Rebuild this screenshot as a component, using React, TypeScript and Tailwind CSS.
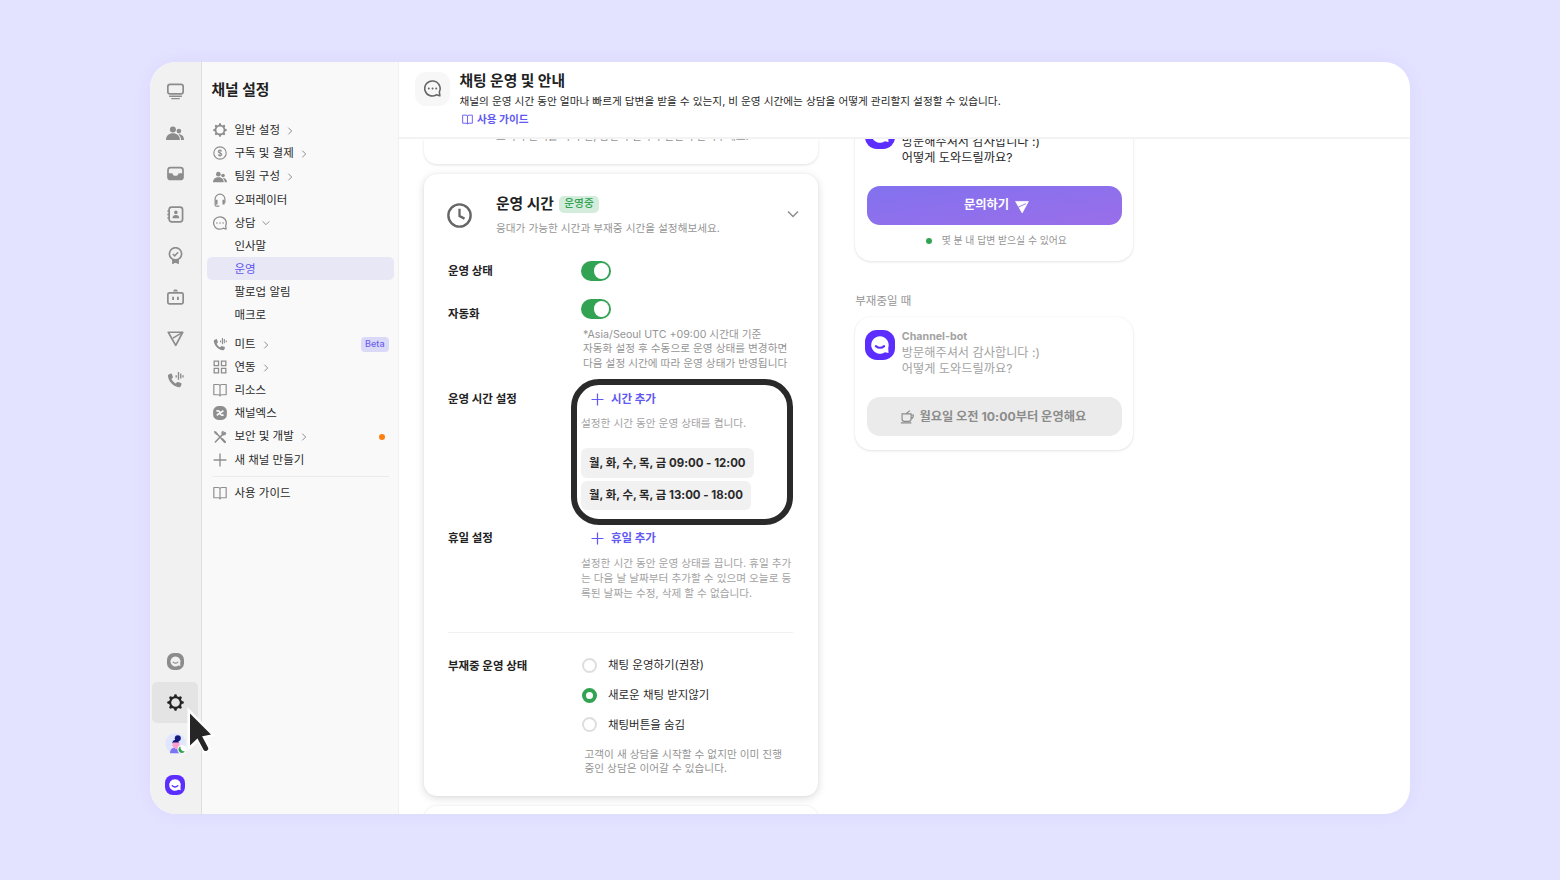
import type { ReactNode } from "react";
import clsx from "clsx";

interface IconProps {
  size?: number;
  className?: string;
}

function Svg({ size = 17, className, children }: IconProps & { children: ReactNode }) {
  return (
    <svg
      width={size}
      height={size}
      viewBox="0 0 24 24"
      fill="none"
      stroke="currentColor"
      strokeWidth={2}
      className={clsx("shrink-0", className)}
    >
      {children}
    </svg>
  );
}

const teeth = [0, 45, 90, 135, 180, 225, 270, 315];

function CogIcon(props: IconProps) {
  return (
    <Svg {...props}>
      <circle cx="12" cy="12" r="7.6" strokeWidth={3} />
      {teeth.map((deg) => (
        <path
          key={deg}
          d="M9.6 4 L10.5 0.8 Q12 -0.4 13.5 0.8 L14.4 4 Z"
          transform={`rotate(${deg} 12 12)`}
          fill="currentColor"
          stroke="none"
        />
      ))}
    </Svg>
  );
}

function MonitorIcon(props: IconProps) {
  return (
    <Svg {...props}>
      <rect x="1.2" y="2" width="21.6" height="13.4" rx="3" strokeWidth={2.4} />
      <path d="M3 18.6h18M6 22h12" />
    </Svg>
  );
}

function PeopleIcon(props: IconProps) {
  return (
    <Svg {...props}>
      <g fill="currentColor" stroke="none">
        <circle cx="9.2" cy="7.2" r="4" />
        <path d="M0 21.2C0 15.6 4 12.4 9.2 12.4S18.5 15.6 18.5 21.2Z" />
        <circle cx="17.2" cy="9.4" r="3.1" />
        <path d="M17.3 13.8C21.3 13.8 24 16.8 24 21.2h-3.9c0-3-1.2-5.4-3.4-7.3z" />
      </g>
    </Svg>
  );
}

function InboxIcon(props: IconProps) {
  return (
    <Svg {...props}>
      <rect x="1.4" y="3.8" width="21.2" height="16.6" rx="3.6" strokeWidth={2.4} />
      <path
        d="M1.4 11.5H7.5c.6 2.4 2.2 3.6 4.5 3.6s3.9-1.2 4.5-3.6h6.1V17a3.6 3.6 0 0 1-3.6 3.6H5A3.6 3.6 0 0 1 1.4 17Z"
        fill="currentColor"
        stroke="none"
      />
    </Svg>
  );
}

function ContactIcon(props: IconProps) {
  return (
    <Svg {...props}>
      <rect x="3" y="1.6" width="19" height="20.8" rx="3.6" strokeWidth={2.4} />
      <path d="M0.4 7.2H3M0.4 12H3M0.4 16.8H3" />
      <circle cx="12.5" cy="9" r="2.5" fill="currentColor" stroke="none" />
      <path d="M7.6 17.3c0-3 2-4.7 4.9-4.7s4.9 1.7 4.9 4.7z" fill="currentColor" stroke="none" />
    </Svg>
  );
}

function AwardIcon(props: IconProps) {
  return (
    <Svg {...props}>
      <circle cx="12" cy="9.6" r="8.6" strokeWidth={2.4} />
      <path d="M8.2 9.8l2.7 2.7 4.8-5.2" />
      <path d="M7.2 17.8V24.4l4.8-2.3 4.8 2.3v-6.6c-3 1.3-6.6 1.3-9.6 0z" fill="currentColor" stroke="none" />
    </Svg>
  );
}

function BotIcon(props: IconProps) {
  return (
    <Svg {...props}>
      <rect x="1.2" y="5.6" width="21.6" height="15.4" rx="2.2" strokeWidth={2.4} />
      <path d="M8.6 10.8v4.8M15.4 10.8v4.8" strokeWidth={2.6} />
      <path d="M8.6 3.6C8.8 1.5 10.2.6 12 .6s3.2.9 3.4 3z" fill="currentColor" stroke="none" />
    </Svg>
  );
}

function SendIcon(props: IconProps) {
  return (
    <Svg {...props}>
      <path d="M1.8 3.2H22.2L12.3 21.6Z" strokeWidth={2.4} strokeLinejoin="round" />
      <path d="M22 3.4L8.3 11.6" />
    </Svg>
  );
}

function SendFilledIcon(props: IconProps) {
  return (
    <Svg {...props}>
      <path d="M1 2.5H23L12.3 22.3Z" fill="currentColor" strokeWidth={1.2} strokeLinejoin="round" />
      <path d="M5.5 12.3L18.8 6.3" stroke="#8e70ed" strokeWidth={1.6} />
    </Svg>
  );
}

function MeetIcon(props: IconProps) {
  return (
    <Svg {...props}>
      <path
        d="M6.2 11.4c1.3 2.7 3.3 4.9 5.9 6.3l2.1-1.9c.4-.4.9-.5 1.4-.3l4.2 1.6c.6.2.9.9.7 1.5l-.9 2.6c-.4 1.2-1.5 1.8-2.7 1.7C9.2 22 2.3 15 1.4 7.3 1.2 6 1.9 4.9 3.1 4.5l2.3-.8c.7-.2 1.3.1 1.5.7l1.4 4c.2.5 0 1-.3 1.3z"
        fill="currentColor"
        stroke="none"
      />
      <path d="M13 6v3M16.2 1.5v11M19.4 3.5v7M22.6 6v3" strokeWidth={1.9} />
    </Svg>
  );
}

function DollarIcon(props: IconProps) {
  return (
    <Svg {...props}>
      <circle cx="12" cy="12" r="10.6" />
      <path
        d="M15 9.3c-.3-1.3-1.5-1.9-3-1.9-1.7 0-3 .8-3 2.2 0 3.3 6.1 1.5 6.1 4.8 0 1.4-1.4 2.2-3.1 2.2-1.7 0-2.9-.8-3.2-2.2M12 5.4v13.2"
        strokeWidth={1.8}
      />
    </Svg>
  );
}

function HeadsetIcon(props: IconProps) {
  return (
    <Svg {...props}>
      <path d="M3.6 17V10.4a8.4 8.4 0 0 1 16.8 0V17" />
      <path d="M4 11.5h3.8v8.3H4zM16.2 11.5H20v8.3h-3.8z" fill="currentColor" stroke="none" />
      <path d="M3.6 17v3.5c0 1.2.8 2 2 2H11" />
    </Svg>
  );
}

function ChatIcon(props: IconProps) {
  return (
    <Svg {...props}>
      <path
        d="M12 1.4a10.6 10.6 0 1 0 5.4 19.5l5 1.5-.7-5.8A10.6 10.6 0 0 0 12 1.4Z"
        strokeWidth={2.2}
        strokeLinejoin="round"
      />
      <path d="M6.7 12h.1M12 12h.1M17.2 12h.1" strokeWidth={2.7} strokeLinecap="round" />
    </Svg>
  );
}

function GridIcon(props: IconProps) {
  return (
    <Svg {...props}>
      <path d="M2 2h7.5v7.5H2zM14.5 2H22v7.5h-7.500zM2 14.5h7.500V22H2zM14.5 14.5H22V22h-7.500z" strokeWidth={2.2} />
    </Svg>
  );
}

function BookIcon(props: IconProps) {
  return (
    <Svg {...props}>
      <path
        d="M1.4 2.5h7.4Q12 2.5 12 5 12 2.5 15.2 2.5h7.4v17.6h-7.4Q12 20.1 12 22.3 12 20.1 8.8 20.1H1.4ZM12 4.5v16.5"
        strokeLinejoin="round"
      />
    </Svg>
  );
}

function ChannelXIcon(props: IconProps) {
  return (
    <Svg {...props}>
      <rect x="0.2" y="0.2" width="23.6" height="23.6" rx="9" fill="currentColor" stroke="none" />
      <path
        d="M5.8 8.4H9.5c2.8 0 2.2 7.2 5 7.2h3.7M17.8 8.2L6.4 15.8"
        stroke="#f9f9f9"
        strokeWidth={2.8}
      />
    </Svg>
  );
}

function ToolsIcon(props: IconProps) {
  return (
    <Svg {...props}>
      <path d="M19.5 4.5L4 20.5M7 7L20 20.5" strokeWidth={2.6} strokeLinecap="round" />
      <path d="M1.5 1.5l4 1.2 3 4-2 2-4-3z" fill="currentColor" stroke="none" />
      <path d="M21.8 3.3a4 4 0 1 1-3.4-1.9L17.5 5l1.500 1.4z" fill="currentColor" stroke="none" />
      <path d="M16 16l4.5 4.5" strokeWidth={3.8} strokeLinecap="round" />
    </Svg>
  );
}

function PlusIcon(props: IconProps) {
  return (
    <Svg {...props}>
      <path d="M12 1v22M1 12h22" strokeWidth={2.3} />
    </Svg>
  );
}

function ChevronIcon({ down, ...props }: IconProps & { down?: boolean }) {
  return (
    <Svg {...props}>
      <path d={down ? "M2 7l10 10L22 7" : "M7 2l10 10L7 22"} strokeWidth={3} />
    </Svg>
  );
}

function ClockIcon(props: IconProps) {
  return (
    <Svg {...props}>
      <circle cx="12" cy="12" r="10.7" strokeWidth={2.3} />
      <path d="M12 5.5v7l4.8 2.5" strokeWidth={2.2} />
    </Svg>
  );
}

function CupIcon(props: IconProps) {
  return (
    <Svg {...props}>
      <path d="M3.5 6.500h15.5v9a4 4 0 0 1-4 4H7.500a4 4 0 0 1-4-4zM19 8.500h4c0 4-1.200 6-4.500 7M1.500 22.200h18M11 6.500c0-2 3-2.500 6-5.500" />
    </Svg>
  );
}

function ChannelLogo({ face = "#fff", ...props }: IconProps & { face?: string }) {
  return (
    <Svg {...props}>
      <rect width="24" height="24" rx="9.5" fill="currentColor" stroke="none" />
      <path d="M12 5a7 7 0 1 0 3.9 12.8l2.9.6-.2-4.2A7 7 0 0 0 12 5Z" fill={face} stroke="none" />
      <path d="M8.7 12.9c1.9 1.7 4.7 1.7 6.6 0" strokeWidth={1.7} strokeLinecap="round" />
    </Svg>
  );
}

function Avatar() {
  return (
    <svg width="21" height="21" viewBox="0 0 21 21" className="overflow-visible">
      <circle cx="10.5" cy="10.5" r="10.2" fill="#e0e6ff" />
      <path d="M5 20.2c0-3.700 2.200-5.700 6-5.700s5 2.500 5 5.700z" fill="#7c74f2" />
      <circle cx="12.8" cy="5.2" r="3" fill="#141a7c" />
      <path d="M7.5 9.5C8 7 10 6 13.5 7.5L14 11H8z" fill="#141a7c" />
      <path d="M8 9.500h6.500v3c0 1.800-1.200 2.800-2 3.500h-2.500c0-1-.5-2-2-2.600-1.300-.6-1.200-2 0-2z" fill="#ff9fd0" />
      <circle cx="17" cy="16.6" r="4.6" fill="#fff" />
      <path d="M15.5 13.2a3.6 3.6 0 1 0 4.5 5.3A4.2 4.2 0 0 1 15.5 13.2Z" fill="#32a353" />
    </svg>
  );
}

const railTop = [MonitorIcon, PeopleIcon, InboxIcon, ContactIcon, AwardIcon, BotIcon, SendIcon, MeetIcon];

interface MenuItem {
  label: string;
  icon?: (props: IconProps) => ReactNode;
  arrow?: "right" | "down";
  active?: boolean;
  beta?: boolean;
  dot?: boolean;
}

const mainMenu: MenuItem[] = [
  { label: "일반 설정", icon: CogIcon, arrow: "right" },
  { label: "구독 및 결제", icon: DollarIcon, arrow: "right" },
  { label: "팀원 구성", icon: PeopleIcon, arrow: "right" },
  { label: "오퍼레이터", icon: HeadsetIcon },
  { label: "상담", icon: ChatIcon, arrow: "down" },
  { label: "인사말" },
  { label: "운영", active: true },
  { label: "팔로업 알림" },
  { label: "매크로" },
];

const extraMenu: MenuItem[] = [
  { label: "미트", icon: MeetIcon, arrow: "right", beta: true },
  { label: "연동", icon: GridIcon, arrow: "right" },
  { label: "리소스", icon: BookIcon },
  { label: "채널엑스", icon: ChannelXIcon },
  { label: "보안 및 개발", icon: ToolsIcon, arrow: "right", dot: true },
  { label: "새 채널 만들기", icon: PlusIcon },
];

function MenuRow({ label, icon: Icon, arrow, active, beta, dot }: MenuItem) {
  return (
    <div
      className={clsx(
        "flex h-[23.1px] items-center rounded-[5px] pr-[5px] pl-[5.5px] text-[11.48px]",
        active ? "bg-[#e8e7f6] text-[#5e56f0]" : "text-[#2a2a2a]"
      )}
    >
      <span className="mr-[7.5px] flex w-[15px] justify-center text-[#8e8e8e]">{Icon && <Icon size={14} />}</span>
      <span className="pt-px">{label}</span>
      {arrow && <ChevronIcon size={8} down={arrow === "down"} className="mt-px ml-[6.5px] text-[#8e8e8e]" />}
      {beta && (
        <span className="ml-auto flex h-[15px] items-center rounded-[4px] bg-[#dbd9f8] px-1 text-[9px] font-medium text-[#6a62ee]">
          Beta
        </span>
      )}
      {dot && <span className="mr-[3.5px] ml-auto size-[6px] rounded-full bg-[#ff7f0e]" />}
    </div>
  );
}

function Rail() {
  return (
    <nav className="flex w-[52px] flex-col justify-between border-r border-[#dedede] bg-[#f1f1f1] pt-[9px] pb-[9px] text-[#8c8c8c]">
      <div className="pr-px">
        {railTop.map((Icon, index) => (
          <div key={index} className="flex h-[41.1px] items-center justify-center">
            <Icon size={index === 1 ? 18 : 17} />
          </div>
        ))}
      </div>
      <div className="pr-px">
        <div className="flex h-[41px] items-center justify-center">
          <ChannelLogo size={17} face="#f1f1f1" />
        </div>
        <div className="mx-[2px] flex h-[41px] items-center justify-center rounded-[5px] bg-[#e4e4e4] text-[#222]">
          <CogIcon size={17} />
        </div>
        <div className="flex h-[41px] items-center justify-center">
          <Avatar />
        </div>
        <div className="flex h-[41px] items-center justify-center text-[#5b2eff]">
          <ChannelLogo size={20} />
        </div>
      </div>
    </nav>
  );
}

function Sidebar() {
  return (
    <aside className="w-[197px] border-r border-[#f0f0f0] bg-[#f9f9f9] px-[4.5px] pt-[18px]">
      <h1 className="pl-[5px] text-[14.76px] leading-[21px] font-bold text-[#222]">채널 설정</h1>
      <div className="mt-[17.8px]">
        {mainMenu.map((item) => (
          <MenuRow key={item.label} {...item} />
        ))}
      </div>
      <div className="mt-[6px]">
        {extraMenu.map((item) => (
          <MenuRow key={item.label} {...item} />
        ))}
      </div>
      <div className="m-[5px] mt-[4.5px] h-px bg-[#ebebeb]" />
      <MenuRow label="사용 가이드" icon={BookIcon} />
    </aside>
  );
}

function Toggle() {
  return (
    <div className="flex h-5 w-[30px] items-center justify-end rounded-full bg-[#32a353] pr-[2px]">
      <span className="size-[15.5px] rounded-full bg-white" />
    </div>
  );
}

function Radio({ label, checked }: { label: string; checked?: boolean }) {
  return (
    <div className="flex h-5 items-center gap-[11px] pl-px text-[11.48px] text-[#2a2a2a]">
      <span
        className={clsx(
          "size-[15px] rounded-full bg-white",
          checked ? "border-4 border-[#32a353]" : "border-2 border-[#dedede]"
        )}
      />
      <span className="pt-px">{label}</span>
    </div>
  );
}

interface FieldProps {
  label: string;
  className?: string;
  labelClass?: string;
  children: ReactNode;
}

function Field({ label, className, labelClass, children }: FieldProps) {
  return (
    <div className={clsx("flex", className)}>
      <div className={clsx("w-[133px] shrink-0 text-[11.48px] leading-5 font-bold text-[#222]", labelClass)}>
        {label}
      </div>
      <div className="min-w-0">{children}</div>
    </div>
  );
}

function AddButton({ label }: { label: string }) {
  return (
    <div className="flex h-5 items-center gap-[7px] pl-[10px] text-[11.48px] font-bold text-[#6259f2]">
      <PlusIcon size={13} />
      <span className="pt-px">{label}</span>
    </div>
  );
}

function HoursCard() {
  return (
    <section className="relative mt-[10px] h-[622px] rounded-[13px] bg-white pt-[20px] pr-[25px] pl-[24.5px] shadow-[0_2px_8px_rgba(0,0,0,0.15),0_0_2px_rgba(0,0,0,0.06)]">
      <div className="flex">
        <ClockIcon size={25} className="mt-[8.5px] ml-[-1px] text-[#666]" />
        <div className="ml-[24px]">
          <div className="flex h-5 items-center gap-[5px]">
            <h3 className="pt-px text-[14.76px] font-bold text-[#222]">운영 시간</h3>
            <span className="flex h-[17px] items-center rounded-[5px] bg-[#d4ecdc] px-[5.5px] text-[10.66px] font-medium text-[#32a353]">
              운영중
            </span>
          </div>
          <p className="mt-[7px] text-[10.66px] leading-[15px] text-[#959595]">
            응대가 가능한 시간과 부재중 시간을 설정해보세요.
          </p>
        </div>
        <ChevronIcon size={12} down className="mt-[13.5px] mr-[-6px] ml-auto text-[#8e8e8e]" />
      </div>

      <Field label="운영 상태" className="mt-[25px]">
        <Toggle />
      </Field>

      <Field label="자동화" className="mt-[18px]" labelClass="pt-[4.5px]">
        <Toggle />
        <p className="mt-[8.5px] pl-[2px] text-[10.66px] leading-[14.8px] whitespace-nowrap text-[#959595]">
          *Asia/Seoul UTC +09:00 시간대 기준
          <br />
          자동화 설정 후 수동으로 운영 상태를 변경하면
          <br />
          다음 설정 시간에 따라 운영 상태가 반영됩니다
        </p>
      </Field>

      <Field label="운영 시간 설정" className="mt-[17.4px]">
        <AddButton label="시간 추가" />
        <p className="mt-[7px] text-[10.66px] leading-[15px] text-[#a3a3a3]">설정한 시간 동안 운영 상태를 켭니다.</p>
        <div className="mt-[17px] flex flex-col items-start gap-[3px] text-[11.45px] font-bold whitespace-nowrap text-[#2a2a2a]">
          <span className="flex h-[29.5px] items-center rounded-[6px] bg-[#f1f1f1] px-2 pt-px">
            월, 화, 수, 목, 금 09:00 - 12:00
          </span>
          <span className="flex h-[29.5px] items-center rounded-[6px] bg-[#f1f1f1] px-2 pt-px">
            월, 화, 수, 목, 금 13:00 - 18:00
          </span>
        </div>
      </Field>

      <Field label="휴일 설정" className="mt-[17.8px]">
        <AddButton label="휴일 추가" />
        <p className="mt-[9.3px] text-[10.66px] leading-[14.8px] whitespace-nowrap text-[#a3a3a3]">
          설정한 시간 동안 운영 상태를 끕니다. 휴일 추가
          <br />
          는 다음 날 날짜부터 추가할 수 있으며 오늘로 등
          <br />
          록된 날짜는 수정, 삭제 할 수 없습니다.
        </p>
      </Field>

      <div className="mt-[30px] h-[1.5px] bg-[#f1f1f1]" />

      <Field label="부재중 운영 상태" className="mt-[22.3px]">
        <div className="flex flex-col gap-[9.6px]">
          <Radio label="채팅 운영하기(권장)" />
          <Radio label="새로운 채팅 받지않기" checked />
          <Radio label="채팅버튼을 숨김" />
        </div>
        <p className="mt-[12.8px] pl-[3.5px] text-[10.66px] leading-[14.8px] whitespace-nowrap text-[#959595]">
          고객이 새 상담을 시작할 수 없지만 이미 진행
          <br />
          중인 상담은 이어갈 수 있습니다.
        </p>
      </Field>

      {/* highlight around the operating hours */}
      <div className="absolute top-[205px] left-[147.5px] h-[146px] w-[222px] rounded-[28px] border-[6px] border-[#2a2a2a]" />
    </section>
  );
}

function PreviewCard({ muted, children }: { muted?: boolean; children: ReactNode }) {
  return (
    <div className="rounded-[16px] bg-white px-[11.5px] pt-[13px] shadow-[0_1px_3px_rgba(0,0,0,0.1),0_0_2px_rgba(0,0,0,0.06)]">
      <div className="ml-[-2px] flex h-[47px] gap-[7px]">
        <ChannelLogo size={30} className="text-[#5b2eff]" />
        <div className={clsx("text-[12.2px] leading-[16.4px]", muted ? "text-[#a3a3a3]" : "text-[#2a2a2a]")}>
          <p className="mb-px text-[10.66px] leading-[14px] font-bold">Channel-bot</p>
          <p>방문해주셔서 감사합니다 :)</p>
          <p>어떻게 도와드릴까요?</p>
        </div>
      </div>
      {children}
    </div>
  );
}

function Cursor() {
  return (
    <svg width="34" height="52" viewBox="0 0 34 52" className="absolute top-[702px] left-[184px]">
      <path d="M6 11.5V43.5L14.3 36.5 26.3 32.5Z" fill="#fff" stroke="#fff" strokeWidth={5} />
      <path d="M14 31l8 14.500" stroke="#fff" strokeWidth={9} strokeLinecap="square" />
      <path d="M6 11.5V43.5L15 35 27 32.5Z" fill="#262626" />
      <path d="M14.5 33l7.200 13.500" stroke="#262626" strokeWidth={5} strokeLinecap="round" />
    </svg>
  );
}

export default function App() {
  return (
    <div className="relative h-[880px] w-[1560px] overflow-hidden bg-[#e4e3ff] px-[150px] pt-[62px] font-['Inter','Noto_Sans_CJK_KR',sans-serif]">
      <div className="flex h-[752px] overflow-hidden rounded-[26px] bg-white shadow-[0_0_24px_rgba(110,100,255,0.08)]">
        <Rail />
        <Sidebar />

        <main className="flex min-w-0 flex-1 flex-col">
          <header className="flex h-[76.5px] shrink-0 border-b-2 border-[#f3f3f3] pl-[16.2px]">
            <div className="mt-[9.5px] flex size-[34.5px] items-center justify-center rounded-[11px] bg-[#f7f7f7] text-[#666]">
              <ChatIcon size={17} />
            </div>
            <div className="ml-[9.8px]">
              <h2 className="mt-[9px] text-[14.76px] leading-5 font-bold text-[#222]">채팅 운영 및 안내</h2>
              <p className="mt-[2.7px] text-[10.68px] leading-[15px] text-[#2a2a2a]">
                채널의 운영 시간 동안 얼마나 빠르게 답변을 받을 수 있는지, 비 운영 시간에는 상담을 어떻게 관리할지 설정할 수 있습니다.
              </p>
              <div className="mt-[3.8px] flex items-center gap-[4px] pl-[2.5px] text-[10.66px] leading-[15px] font-bold text-[#6259f2]">
                <BookIcon size={11} />
                사용 가이드
              </div>
            </div>
          </header>

          <div className="flex flex-1 items-start gap-[37.3px] overflow-hidden pl-[24.5px]">
            <div className="w-[394.5px] shrink-0">
              <section className="h-[25.5px] rounded-b-[13px] bg-white pl-[72.5px] shadow-[0_1px_3px_rgba(0,0,0,0.12)]">
                <p className="relative -top-[9.5px] text-[10.66px] leading-[15px] text-[#959595]">
                  고객이 문의를 하기 전, 답변이 얼마나 걸릴지 알려주세요.
                </p>
              </section>
              <HoursCard />
              <section className="mt-[9.5px] h-[40px] rounded-t-[13px] bg-white shadow-[0_0_3px_rgba(0,0,0,0.1)]" />
            </div>

            <div className="-mt-[33px] w-[278px]">
              <PreviewCard>
                <div className="mt-[20.5px] flex h-[39px] items-center justify-center gap-[6px] rounded-[13px] bg-linear-to-br from-[#8271ee] to-[#9a6eea] pl-[4.5px] text-[12.3px] font-bold text-white">
                  <span>문의하기</span>
                  <SendFilledIcon size={14} className="mt-[2px]" />
                </div>
                <div className="flex items-center justify-center gap-[10px] pt-[8px] pb-[13px] pl-[4px] text-[9.84px] leading-[15px] text-[#959595]">
                  <span className="size-[6px] rounded-full bg-[#32a353]" />
                  몇 분 내 답변 받으실 수 있어요
                </div>
              </PreviewCard>

              <p className="mt-[32.5px] text-[11.48px] leading-[15px] text-[#959595]">부재중일 때</p>

              <div className="mt-[8.5px]">
                <PreviewCard muted>
                  <div className="mt-[20px] flex h-[39px] items-center justify-center gap-[5px] rounded-[13px] bg-[#ebebeb] pr-[2px] text-[12.25px] font-bold text-[#8c8c8c]">
                    <CupIcon size={14} />
                    <span className="pt-px">월요일 오전 10:00부터 운영해요</span>
                  </div>
                  <div className="h-[14px]" />
                </PreviewCard>
              </div>
            </div>
          </div>
        </main>
      </div>
      <Cursor />
    </div>
  );
}
